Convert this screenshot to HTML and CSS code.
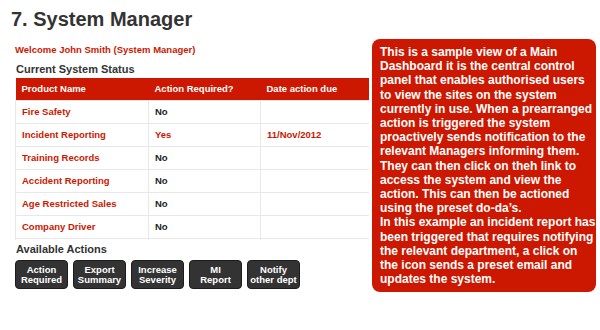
FILE: index.html
```html
<!DOCTYPE html>
<html lang="en">
<head>
    <meta charset="UTF-8">
    <meta name="viewport" content="width=device-width, initial-scale=1.0">
    <title>System Manager</title>
    <link rel="stylesheet" href="styles.css">
</head>
<body>
<h1>7. System Manager</h1>
<div class="main">
    <div class="dashboard">
        <p class="welcome">Welcome John Smith (System Manager)</p>
        <h2>Current System Status</h2>

        <!-- Status table -->
        <div class="table-wrap">
            <table class="status">
                <tr>
                    <th class="col-name">Product Name</th>
                    <th class="col-action">Action Required?</th>
                    <th class="col-date">Date action due</th>
                </tr>
                <tr><td class="name">Fire Safety</td><td>No</td><td></td></tr>
                <tr><td class="name">Incident Reporting</td><td class="alert">Yes</td><td class="alert">11/Nov/2012</td></tr>
                <tr><td class="name">Training Records</td><td>No</td><td></td></tr>
                <tr><td class="name">Accident Reporting</td><td>No</td><td></td></tr>
                <tr><td class="name">Age Restricted Sales</td><td>No</td><td></td></tr>
                <tr><td class="name">Company Driver</td><td>No</td><td></td></tr>
                <tr><td></td><td></td><td></td></tr>
            </table>
        </div>

        <h2 class="actions-title">Available Actions</h2>
        <div class="actions">
            <button>Action<br>Required</button>
            <button>Export<br>Summary</button>
            <button>Increase<br>Severity</button>
            <button>MI<br>Report</button>
            <button>Notify<br>other dept</button>
        </div>
    </div>

    <!-- Explanation callout -->
    <div class="note">
        This is a sample view of a Main Dashboard it is the central control panel that enables authorised users to view the sites on the system currently in use. When a prearranged action is triggered the system proactively sends notification to the relevant Managers informing them. They can then click on theh link to access the system and view the action. This can then be actioned using the preset do-da’s.<br>
        In this example an incident report has been triggered that requires notifying the relevant department, a click on the icon sends a preset email and updates the system.
    </div>
</div>
</body>
</html>
```

FILE: styles.css
```css
body {
    font-family: "Liberation Sans", Arial, sans-serif;
    margin: 0;
    padding: 0;
    background-color: #fff;
    color: #333;
}
h1 {
    margin: 0;
    padding: 7px 0 0 11px;
    font-size: 20px;
    line-height: 24px;
    color: #333;
}
.main {
    display: flex;
    align-items: flex-start;
    gap: 3px;
    margin-top: 8px;
}
.dashboard {
    width: 354px;
    margin-left: 15px;
    padding-top: 5px;
}
.welcome {
    margin: 0 0 7px 0;
    font-size: 9.5px;
    line-height: 12px;
    font-weight: bold;
    color: #cc1800;
}
h2 {
    margin: 0 0 2px 1px;
    font-size: 11px;
    line-height: 13px;
    color: #333;
}
.table-wrap {
    height: 162px;
    overflow: hidden;
}
table.status {
    width: 354px;
    table-layout: fixed;
    border-collapse: collapse;
    font-size: 9.5px;
    font-weight: bold;
}
.status th {
    box-sizing: border-box;
    height: 22px;
    line-height: 22px;
    padding: 0 6px;
    text-align: left;
    color: #fff;
    background-color: #cc1800;
}
.col-name {
    width: 133px;
}
.col-action {
    width: 112px;
}
.col-date {
    width: 109px;
}
.status td {
    height: 22px;
    line-height: 22px;
    padding: 0 6px;
    border: 1px solid #e8e8e8;
    color: #222;
}
.status td.name,
.status td.alert {
    color: #cc1800;
}
.actions-title {
    margin-top: 3px;
    margin-bottom: 4px;
}
.actions {
    display: flex;
    gap: 5px;
}
.actions button {
    width: 53px;
    height: 29px;
    padding: 0;
    margin: 0;
    background-color: #333;
    border: 1px solid #1c1c1c;
    border-radius: 4px;
    color: #fff;
    font-family: "Liberation Sans", Arial, sans-serif;
    font-size: 9.5px;
    font-weight: bold;
    line-height: 10px;
    cursor: pointer;
}
.note {
    width: 216px;
    padding: 6px 0 6px 8px;
    background-color: #cc1800;
    border-radius: 8px;
    color: #fff;
    font-size: 12px;
    font-weight: bold;
    line-height: 14.2px;
}
```
